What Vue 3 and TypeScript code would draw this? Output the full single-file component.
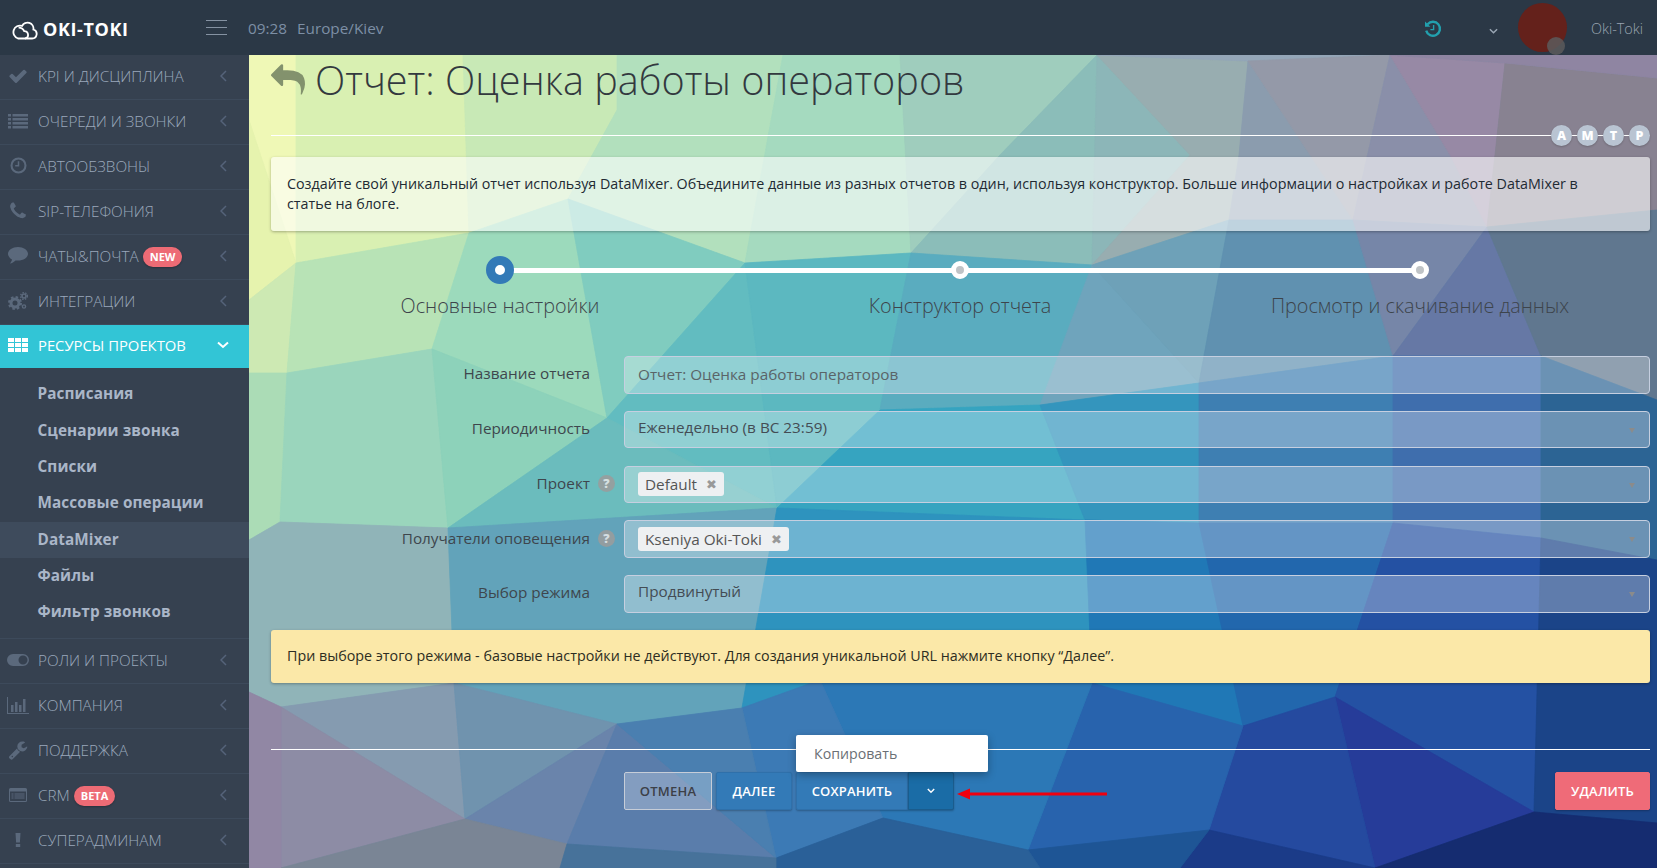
<script setup lang="ts">
interface Poly { p: string; f: string }
const polys: Poly[] = [
  { p: '249,55 296,55 296,263 249,120', f: '#eff8b6' },
  { p: '249,120 296,263 249,300', f: '#e6f3ae' },
  { p: '296,55 463,55 469,233 296,263', f: '#d9f0b2' },
  { p: '463,55 617,55 617,110 568,199 469,233', f: '#c8e9b6' },
  { p: '617,55 783,55 745,263 568,199 617,110', f: '#b2e0bd' },
  { p: '783,55 900,55 911,253 745,263', f: '#a5dabf' },
  { p: '900,55 1097,55 1000,155 911,253', f: '#9fcdbd' },
  { p: '1097,55 1000,155 911,253 1092,265', f: '#8bbdb9' },
  { p: '1097,55 1190,155 1092,265', f: '#8cb6b8' },
  { p: '1097,55 1248,61 1239,155 1229,220 1092,265 1190,155', f: '#98adb0' },
  { p: '1097,55 1390,55 1248,61', f: '#94a6b8' },
  { p: '1248,61 1310,155 1353,220 1229,220 1239,155', f: '#8b9cae' },
  { p: '1248,61 1390,55 1353,220 1310,155', f: '#9499a8' },
  { p: '1390,55 1450,155 1487,227 1353,220', f: '#8a8fa9' },
  { p: '1390,55 1505,63 1495,155 1487,227 1450,155', f: '#9789a5' },
  { p: '1505,63 1657,78 1657,210 1487,227 1495,155', f: '#888291' },
  { p: '1390,55 1657,55 1657,78 1505,63', f: '#8f85a2' },
  { p: '249,300 296,263 287,373 249,373', f: '#cde9b3' },
  { p: '296,263 469,233 432,349 287,373', f: '#b8e3b6' },
  { p: '469,233 568,199 607,418 432,349', f: '#9cdabc' },
  { p: '568,199 745,263 607,418', f: '#80ccbf' },
  { p: '745,263 777,508 607,418', f: '#62bcc0' },
  { p: '745,263 911,253 880,410 777,508', f: '#5cb8c0' },
  { p: '911,253 1092,265 1040,405 880,410', f: '#5aacbf' },
  { p: '1092,265 1199,383 1040,405', f: '#6fa4bc' },
  { p: '1092,265 1229,220 1199,383', f: '#6ea1b8' },
  { p: '1229,220 1353,220 1393,356 1199,383', f: '#6091b0' },
  { p: '1353,220 1487,227 1393,356', f: '#7686a8' },
  { p: '1393,356 1487,227 1541,356', f: '#6678a5' },
  { p: '1487,227 1657,210 1657,400 1541,356', f: '#60778f' },
  { p: '249,373 287,373 280,522 249,540', f: '#abdcb6' },
  { p: '287,373 432,349 448,528 280,522', f: '#9ad5bc' },
  { p: '432,349 607,418 448,528', f: '#8dd2ba' },
  { p: '448,528 607,418 777,508', f: '#6bbcbd' },
  { p: '249,540 280,522 448,528 454,683 281,707 249,692', f: '#90b4b8' },
  { p: '448,528 777,508 742,708 617,724 454,683', f: '#62a3ba' },
  { p: '777,508 880,410 1040,405 1085,520', f: '#36a4c0' },
  { p: '1040,405 1199,383 1199,523 1085,520', f: '#3495bd' },
  { p: '1199,383 1393,356 1393,523 1199,523', f: '#3e7fb2' },
  { p: '1393,356 1541,356 1541,538 1393,523', f: '#3f6ead' },
  { p: '1541,356 1657,400 1657,560 1541,538', f: '#2c6494' },
  { p: '777,508 1085,520 1092,683 820,680 742,708', f: '#2e93be' },
  { p: '1085,520 1199,523 1243,726 1092,683', f: '#2078b6' },
  { p: '1199,523 1393,523 1335,697 1243,726', f: '#2267ad' },
  { p: '1393,523 1541,538 1534,812 1335,697', f: '#2451a3' },
  { p: '1541,538 1657,560 1657,823 1534,812', f: '#1b4488' },
  { p: '1335,697 1534,812 1375,868', f: '#263c99' },
  { p: '1243,726 1335,697 1375,868 1209,830', f: '#254a9f' },
  { p: '1092,683 1243,726 1209,830 1028,850', f: '#2863ad' },
  { p: '820,680 1092,683 1028,850 883,818', f: '#2c78b6' },
  { p: '742,708 820,680 883,818 776,858', f: '#3c7ab5' },
  { p: '1534,812 1657,823 1657,868 1375,868', f: '#152c70' },
  { p: '1209,830 1375,868 1180,868', f: '#1b3b88' },
  { p: '1028,850 1209,830 1180,868 1040,868', f: '#1e5595' },
  { p: '883,818 1028,850 1040,868 776,868 776,858', f: '#2a6098' },
  { p: '281,707 454,683 465,819', f: '#859bb0' },
  { p: '454,683 617,724 465,819', f: '#7093ae' },
  { p: '617,724 567,844 465,819', f: '#6a84ab' },
  { p: '617,724 776,858 567,844', f: '#5a7dab' },
  { p: '617,724 742,708 776,858', f: '#4a7fb0' },
  { p: '281,707 465,819 281,868', f: '#8d8ca5' },
  { p: '249,692 281,707 281,868 249,868', f: '#9187a4' },
  { p: '465,819 567,844 560,868 281,868', f: '#7a8595' },
  { p: '567,844 776,858 776,868 560,868', f: '#47729a' },
]

interface Item { id: string; label: string; badge?: string; open?: boolean }
const topItems: Item[] = [
  { id: 'check', label: 'KPI И ДИСЦИПЛИНА' },
  { id: 'list', label: 'ОЧЕРЕДИ И ЗВОНКИ' },
  { id: 'clock', label: 'АВТООБЗВОНЫ' },
  { id: 'phone', label: 'SIP-ТЕЛЕФОНИЯ' },
  { id: 'chat', label: 'ЧАТЫ&ПОЧТА', badge: 'NEW' },
  { id: 'cogs', label: 'ИНТЕГРАЦИИ' },
]
const subItems = ['Расписания', 'Сценарии звонка', 'Списки', 'Массовые операции', 'DataMixer', 'Файлы', 'Фильтр звонков']
const bottomItems: Item[] = [
  { id: 'toggle', label: 'РОЛИ И ПРОЕКТЫ' },
  { id: 'chart', label: 'КОМПАНИЯ' },
  { id: 'wrench', label: 'ПОДДЕРЖКА' },
  { id: 'crm', label: 'CRM', badge: 'BETA' },
  { id: 'excl', label: 'СУПЕРАДМИНАМ' },
]
const amtp = ['A', 'M', 'T', 'P']
const steps = [
  { label: 'Основные настройки', active: true },
  { label: 'Конструктор отчета', active: false },
  { label: 'Просмотр и скачивание данных', active: false },
]
</script>

<template>
  <div class="app">
    <header class="topbar">
      <div class="brand">
        <svg class="cloud" viewBox="0 0 26 20" fill="none" stroke="#fff" stroke-width="1.8">
          <path d="M6 18.5h14a4.6 4.6 0 0 0 1.4-9 6 6 0 0 0-11.3-3.6A6.2 6.2 0 0 0 6 18.5z" />
          <path d="M6.6 7.6a6 6 0 0 1 5.6 3.6 4 4 0 0 1 3.9 3.8 3.6 3.6 0 0 1-3 3.5" />
        </svg>
        <span class="brand-text">OKI-TOKI</span>
      </div>
      <div class="burger"><i></i><i></i><i></i></div>
      <span class="time">09:28</span>
      <span class="zone">Europe/Kiev</span>
      <div class="top-right">
        <svg class="history" viewBox="0 0 18 18" fill="none" stroke="#22a0ae" stroke-width="2.4">
          <path d="M3.6 4.2A7 7 0 1 1 2.2 10.6" />
          <path d="M1 1.4v5.4h5.4z" fill="#22a0ae" stroke="none" />
          <path d="M9.6 5v4.6H6.4" stroke-width="1.4" />
        </svg>
        <svg class="top-chev" viewBox="0 0 10 7" fill="none" stroke="#9aa6b4" stroke-width="1.6">
          <path d="M1 1l4 4 4-4" />
        </svg>
        <div class="avatar"><span class="presence"></span></div>
        <span class="username">Oki-Toki</span>
      </div>
    </header>

    <div class="body">
      <aside class="sidebar">
        <template v-for="it in topItems" :key="it.id">
          <div class="nav-item">
            <span class="nav-ico">
              <svg v-if="it.id === 'check'" viewBox="0 0 1792 1792" width="20" height="20"><path d="M1671 566q0 40-28 68l-724 724-136 136q-28 28-68 28t-68-28l-136-136-362-362q-28-28-28-68t28-68l136-136q28-28 68-28t68 28l294 295 656-657q28-28 68-28t68 28l136 136q28 28 28 68z" /></svg>
              <svg v-else-if="it.id === 'list'" viewBox="0 0 20 16" width="20" height="16"><path d="M0 1h3v2.4H0zM4.5 1H20v2.4H4.500zM0 5h3v2.400H0zM4.500 5H20v2.400H4.500zM0 9h3v2.400H0zM4.500 9H20v2.400H4.500zM0 13h3v2.400H0zM4.500 13H20v2.400H4.500z" /></svg>
              <svg v-else-if="it.id === 'clock'" viewBox="0 0 18 18" width="17" height="17"><circle cx="9" cy="9" r="7.400" fill="none" stroke="currentColor" stroke-width="2.200" /><path d="M9.800 4.500v5.500H5.500V8.400h2.700V4.500z" /></svg>
              <svg v-else-if="it.id === 'phone'" viewBox="0 0 1792 1792" width="20" height="20"><path d="M1600 1240q0 27-10 70.500t-21 68.500q-21 50-122 106-94 51-186 51-27 0-53-3.500t-57.500-12.500-47-14.500-55.500-20.500-49-18q-98-35-175-83-127-79-264-216t-216-264q-48-77-83-175-3-9-18-49t-20.500-55.500-14.500-47-12.500-57.500-3.500-53q0-92 51-186 56-101 106-122 25-11 68.500-21t70.500-10q14 0 21 3 18 6 53 76 11 19 30 54t35 63.500 31 53.500q3 4 17.500 25t21.500 35.500 7 28.500q0 20-28.500 50t-62 55-62 53-28.500 46q0 9 5 22.500t8.500 20.500 14 24 11.500 19q76 137 174 235t235 174q2 1 19 11.500t24 14 20.500 8.500 22.500 5q18 0 46-28.500t53-62 55-62 50-28.500q14 0 28.500 7t35.500 21.500 25 17.500q25 15 53.500 31t63.500 35 54 30q70 35 76 53 3 7 3 21z" /></svg>
              <svg v-else-if="it.id === 'chat'" viewBox="0 0 20 17" width="20" height="17"><path d="M10 0c5.500 0 10 3 10 6.800s-4.500 6.800-10 6.800c-.9 0-1.700-.1-2.500-.2C6 15 4 16.200 1.800 16.500c1-1 1.900-2.200 2.200-4C1.600 11.200 0 9.100 0 6.800 0 3 4.500 0 10 0z" /></svg>
              <svg v-else viewBox="0 0 20 18" width="20" height="18">
                <circle cx="7" cy="11" r="4" fill="none" stroke="currentColor" stroke-width="3" />
                <circle cx="7" cy="11" r="6" fill="none" stroke="currentColor" stroke-width="2" stroke-dasharray="2.500 2.200" />
                <circle cx="16" cy="4" r="2" fill="none" stroke="currentColor" stroke-width="1.600" />
                <circle cx="16" cy="4" r="3.400" fill="none" stroke="currentColor" stroke-width="1.400" stroke-dasharray="1.500 1.300" />
                <circle cx="16" cy="14.500" r="1.600" fill="none" stroke="currentColor" stroke-width="1.400" />
              </svg>
            </span>
            <span class="nav-label">{{ it.label }}</span>
            <span v-if="it.badge" class="badge">{{ it.badge }}</span>
            <svg class="nav-chev" viewBox="0 0 7 12" fill="none" stroke="currentColor" stroke-width="1.500"><path d="M6 1L1 6l5 5" /></svg>
          </div>
        </template>

        <div class="nav-item active">
          <span class="nav-ico">
            <svg viewBox="0 0 20 16" width="20" height="16"><path d="M0 1h6v4H0zM7 1h6v4H7zM14 1h6v4h-6zM0 6h6v4H0zM7 6h6v4H7zM14 6h6v4h-6zM0 11h6v4H0zM7 11h6v4H7zM14 11h6v4h-6z" /></svg>
          </span>
          <span class="nav-label">РЕСУРСЫ ПРОЕКТОВ</span>
          <svg class="nav-chev down" viewBox="0 0 12 8" fill="none" stroke="currentColor" stroke-width="2"><path d="M1 1.500l5 4.500 5-4.500" /></svg>
        </div>

        <div class="sub-list">
          <div v-for="s in subItems" :key="s" class="sub-item" :class="{ current: s === 'DataMixer' }">{{ s }}</div>
        </div>

        <template v-for="it in bottomItems" :key="it.id">
          <div class="nav-item">
            <span class="nav-ico">
              <svg v-if="it.id === 'toggle'" viewBox="0 0 22 12" width="22" height="12"><path fill-rule="evenodd" d="M6 0h10a6 6 0 0 1 0 12H6A6 6 0 0 1 6 0zm10 1.500a4.500 4.500 0 1 0 0 9 4.500 4.500 0 0 0 0-9z" /></svg>
              <svg v-else-if="it.id === 'chart'" viewBox="0 0 22 18" width="22" height="18"><path d="M0 1h1v16h21v1H0zM4 9h2.500v7H4zM8 6h2.500v10H8zM12 9h2.500v7H12zM16 3h2.500v13H16z" /></svg>
              <svg v-else-if="it.id === 'wrench'" viewBox="0 0 1792 1792" width="20" height="20"><path d="M448 1472q0-26-19-45t-45-19-45 19-19 45 19 45 45 19 45-19 19-45zm644-420l-682 682q-37 37-90 37-52 0-91-37l-106-108q-38-36-38-90 0-53 38-91l681-681q39 98 114.500 173.500t173.500 114.500zm634-435q0 39-23 106-47 134-164.500 217.500t-258.500 83.500q-185 0-316.500-131.500t-131.500-316.500 131.500-316.500 316.500-131.500q58 0 121.500 16.500t107.500 46.500q16 11 16 28t-16 28l-293 169v224l193 107q5-3 79-48.500t135.500-81 70.500-35.500q15 0 23.500 10t8.500 25z" /></svg>
              <svg v-else-if="it.id === 'crm'" viewBox="0 0 18 14" width="18" height="14"><path fill-rule="evenodd" d="M1.500 0h15A1.500 1.500 0 0 1 18 1.500v11a1.500 1.500 0 0 1-1.500 1.500h-15A1.500 1.500 0 0 1 0 12.500v-11A1.500 1.500 0 0 1 1.500 0zM1 3.500V12.500c0 .3.200.5.500.5h15c.3 0 .5-.2.500-.5V3.500zM2.500 5.500h2v1h-2zM5.500 5.500h10v1h-10zM2.500 7.500h2v1h-2zM5.500 7.500h10v1h-10zM2.500 9.500h2v1h-2zM5.500 9.500h10v1h-10z" /></svg>
              <svg v-else viewBox="0 0 6 14" width="6" height="14"><path d="M.5 0h5l-.6 9.500H1.100zM.8 11h4.400v3H.800z" /></svg>
            </span>
            <span class="nav-label">{{ it.label }}</span>
            <span v-if="it.badge" class="badge">{{ it.badge }}</span>
            <svg class="nav-chev" viewBox="0 0 7 12" fill="none" stroke="currentColor" stroke-width="1.500"><path d="M6 1L1 6l5 5" /></svg>
          </div>
        </template>
      </aside>

      <main class="main">
        <svg class="poly-bg" viewBox="249 55 1408 813" preserveAspectRatio="none">
          <defs>
            <linearGradient id="basefill" x1="0" y1="0" x2="1" y2="1">
              <stop offset="0" stop-color="#d8efb3" />
              <stop offset="0.5" stop-color="#3d9fc0" />
              <stop offset="1" stop-color="#1a3a85" />
            </linearGradient>
          </defs>
          <rect x="249" y="55" width="1408" height="813" fill="url(#basefill)" />
          <polygon v-for="(pl, i) in polys" :key="i" :points="pl.p" :fill="pl.f" :stroke="pl.f" stroke-width="0.8" />
        </svg>

        <div class="content">
          <div class="title-row">
            <svg class="back" viewBox="0 0 1792 1792" width="34" height="34"><path d="M1792 1120q0 166-127 451-3 7-10.500 24t-13.500 30-13 22q-12 17-28 17-15 0-23.500-10t-8.500-25q0-9 2.500-26.500t2.500-23.500q5-68 5-123 0-101-17.500-181t-48.500-138.500-80-101-105.500-69.500-133-42.500-154-21.500-175.500-6h-224v256q0 26-19 45t-45 19-45-19l-512-512q-19-19-19-45t19-45l512-512q19-19 45-19t45 19 19 45v256h224q713 0 875 403 53 134 53 333z" /></svg>
            <h1 class="title">Отчет: Оценка работы операторов</h1>
            <div class="amtp">
              <span v-for="l in amtp" :key="l" class="amtp-dot">{{ l }}</span>
            </div>
          </div>

          <div class="info">Создайте свой уникальный отчет используя DataMixer. Объедините данные из разных отчетов в один, используя конструктор. Больше информации о настройках и работе DataMixer в статье на блоге.</div>

          <div class="stepper">
            <div v-for="(st, i) in steps" :key="st.label" class="step">
              <div class="step-track">
                <span v-if="i < steps.length - 1" class="step-line"></span>
                <span class="step-dot" :class="{ on: st.active }"></span>
              </div>
              <div class="step-label">{{ st.label }}</div>
            </div>
          </div>

          <div class="form">
            <label class="f-label">Название отчета</label>
            <span></span>
            <div class="field muted">Отчет: Оценка работы операторов</div>

            <label class="f-label">Периодичность</label>
            <span></span>
            <div class="field select lift">Еженедельно (в ВС 23:59)<i class="caret"></i></div>

            <label class="f-label">Проект</label>
            <span class="help">?</span>
            <div class="field select"><span class="chip">Default<b class="x">✖</b></span><i class="caret"></i></div>

            <label class="f-label">Получатели оповещения</label>
            <span class="help">?</span>
            <div class="field select"><span class="chip">Kseniya Oki-Toki<b class="x">✖</b></span><i class="caret"></i></div>

            <label class="f-label">Выбор режима</label>
            <span></span>
            <div class="field select lift">Продвинутый<i class="caret"></i></div>
          </div>

          <div class="alert">При выборе этого режима - базовые настройки не действуют. Для создания уникальной URL нажмите кнопку “Далее”.</div>

          <div class="rule"></div>

          <div class="actions">
            <button class="btn ghost">ОТМЕНА</button>
            <button class="btn blue">ДАЛЕЕ</button>
            <div class="split">
              <div class="menu">Копировать</div>
              <button class="btn blue save">СОХРАНИТЬ</button>
              <button class="btn blue caret-btn">
                <svg viewBox="0 0 10 7" width="8" height="6" fill="none" stroke="#fff" stroke-width="1.800"><path d="M1 1l4 4 4-4" /></svg>
              </button>
              <svg class="arrow" viewBox="0 0 150 12" width="150" height="12"><path d="M0 6L13 .5v4h137v3H13v4z" fill="#f0000f" /></svg>
            </div>
            <button class="btn danger">УДАЛИТЬ</button>
          </div>
        </div>
      </main>
    </div>
  </div>
</template>

<style>
html, body { margin: 0; padding: 0; overflow: hidden; }
</style>

<style scoped>
.app { width: 1657px; height: 868px; display: flex; flex-direction: column; overflow: hidden; font-family: "Open Sans", "Noto Sans", sans-serif; }
.topbar { height: 55px; box-sizing: border-box; padding-top: 2px; flex: none; background: #2b3846; display: flex; align-items: center; position: relative; z-index: 3; }
.brand { width: 206px; display: flex; align-items: center; padding-left: 12px; box-sizing: border-box; }
.cloud { width: 26px; height: 20px; margin-right: 5px; margin-top: 2px; }
.brand-text { color: #fff; font-size: 18px; font-weight: 700; letter-spacing: .6px; line-height: 1; margin-top: 1px; }
.burger { width: 21px; height: 15px; display: flex; flex-direction: column; justify-content: space-between; margin-top: -2px; }
.burger i { display: block; height: 1px; background: #8592a2; }
.time { color: #7d8fa5; font-size: 15.300px; margin-left: 21px; margin-top: -2px; }
.zone { color: #7d8fa5; font-size: 15.300px; margin-left: 10px; margin-top: -2px; }
.top-right { margin-left: auto; display: flex; align-items: center; padding-right: 14px; }
.history { width: 18px; height: 18px; margin-right: 47px; margin-top: 0; }
.top-chev { width: 9px; height: 7px; margin-right: 20px; margin-top: 6px; }
.avatar { width: 49px; height: 49px; border-radius: 50%; background: #64211b; position: relative; margin-right: 24px; margin-top: -3px; }
.presence { position: absolute; width: 18px; height: 18px; border-radius: 50%; background: #5c5a5c; left: 29px; top: 34px; opacity: .85; }
.username { color: #9aa5b1; font-size: 14.400px; font-weight: 300; }

.body { flex: 1; display: flex; min-height: 0; }
.sidebar { width: 249px; flex: none; background: #364150; overflow: hidden; }
.nav-item { height: 44.950px; box-sizing: border-box; border-bottom: 1px solid #3d4a5b; display: flex; align-items: center; padding: 0 0 2px 38px; position: relative; color: #9aa8bb; }
.nav-ico { position: absolute; left: 6px; width: 24px; top: 0; bottom: 2px; display: flex; align-items: center; justify-content: center; color: #5b697c; fill: #5b697c; margin-left: 0; }
.nav-label { font-size: 15.300px; font-weight: 300; white-space: nowrap; letter-spacing: 0; }
.badge { background: #ed6b75; color: #fff; font-size: 11px; font-weight: 700; border-radius: 10px; height: 20px; line-height: 20px; padding: 0 7px; margin-left: 4px; margin-top: 2px; box-shadow: 0 1px 2px rgba(0,0,0,.25); }
.nav-chev { position: absolute; left: 220px; width: 7px; height: 12px; color: #55637a; top: 15px; }
.nav-item.active { background: #32c5d6; border-bottom: 0; height: 43.700px; color: #fff; padding-bottom: 3px; }
.nav-item.active .nav-ico { color: #fff; fill: #fff; bottom: 3px; }
.nav-item.active .nav-label { font-weight: 400; font-size: 14.800px; }
.nav-chev.down { left: 217px; width: 12px; height: 8px; color: #fff; top: 16px; }
.sub-list { padding: 8px 0 8px; border-bottom: 1px solid #3d4a5b; }
.sub-item { height: 36.300px; line-height: 35.500px; padding-left: 37.500px; color: #aab6c8; font-size: 15.300px; font-weight: 700; letter-spacing: .1px; }
.sub-item.current { background: #3e4b5c; }

.main { flex: 1; position: relative; min-width: 0; }
.poly-bg { position: absolute; inset: 0; width: 100%; height: 100%; }
.content { position: relative; padding: 0 7px 0 22px; }

.title-row { height: 81px; box-sizing: border-box; border-bottom: 1px solid #fff; position: relative; display: flex; align-items: flex-start; }
.back { fill: #7e8d6a; margin: 8px 10px 0 0; flex: none; opacity: .95; }
.title { margin: 0; font-size: 39.600px; font-weight: 300; color: #33393f; line-height: 50px; white-space: nowrap; }
.amtp { position: absolute; right: 0; bottom: -11px; display: flex; gap: 5px; }
.amtp-dot { width: 21px; height: 21px; border-radius: 50%; background: #b9c4d2; color: #fff; font-size: 12.500px; font-weight: 800; text-align: center; line-height: 21px; box-shadow: 0 1px 2px rgba(0,0,0,.2); }

.info { margin-top: 21px; padding: 17px 40px 17px 16px; border-radius: 3px; background: rgba(255,255,255,.6); color: #222a33; font-size: 14.300px; line-height: 20px; box-shadow: 0 1px 3px rgba(0,0,0,.3); }

.stepper { height: 125px; display: grid; grid-template-columns: repeat(3, 460px); margin-left: -1px; }
.step { position: relative; text-align: center; }
.step-track { height: 28px; margin-top: 25px; position: relative; display: flex; align-items: center; justify-content: center; }
.step-line { position: absolute; left: 50%; width: 100%; height: 5px; background: #fff; top: 12px; }
.step-dot { position: relative; width: 18px; height: 18px; box-sizing: border-box; border-radius: 50%; background: #bfc3c6; border: 5px solid #fff; }
.step-dot.on { width: 28px; height: 28px; background: #fff; border: 9px solid #337ab7; }
.step-label { margin-top: 9px; font-size: 19.800px; font-weight: 300; color: #3d444b; line-height: 26px; white-space: nowrap; }

.form { display: grid; grid-template-columns: 319px 34px 1fr; grid-auto-rows: 37.500px; row-gap: 17.300px; align-items: center; }
.f-label { text-align: right; font-size: 15.300px; color: #3e464d; white-space: nowrap; margin-top: -3px; }
.help { width: 17px; height: 17px; border-radius: 50%; background: #9c9c9c; color: #e8e8e8; font-size: 12.500px; font-weight: 800; text-align: center; line-height: 17px; margin-left: 8px; opacity: .85; margin-top: -2px; }
.field { height: 37.500px; box-sizing: border-box; border: 1px solid #c6cfe0; border-radius: 4px; background: rgba(255,255,255,.3); padding: 0 13px; display: flex; align-items: center; font-size: 15.300px; color: #444c54; position: relative; }
.field.muted { color: #5a6468; padding-bottom: 2px; }
.field.lift { padding-bottom: 6px; }
.caret { position: absolute; right: 14px; top: 16px; width: 0; height: 0; border-left: 3.500px solid transparent; border-right: 3.500px solid transparent; border-top: 5px solid #8b8b8b; }
.chip { height: 24px; box-sizing: border-box; background: #eef0f2; border-radius: 3px; padding: 0 7px; display: inline-flex; align-items: center; font-size: 15.300px; color: #555; gap: 9px; }
.x { font-size: 13px; color: #999; font-weight: 400; font-family: "DejaVu Sans", sans-serif; }

.alert { margin-top: 17px; height: 53px; box-sizing: border-box; padding: 16px; line-height: 20px; background: #fbe8a8; border-radius: 3px; font-size: 14.300px; color: #2d2d22; box-shadow: 0 1px 3px rgba(0,0,0,.3); }
.rule { margin-top: 66px; height: 1px; background: #fff; }
.actions { margin-top: 22px; display: flex; height: 38px; padding-left: 353px; }
.btn { height: 38px; box-sizing: border-box; border-radius: 2px; border: 1px solid transparent; font-family: inherit; font-size: 13px; font-weight: 600; padding: 0; color: #fff; letter-spacing: .2px; }
.ghost { width: 88px; background: rgba(255,255,255,.25); border: 1px solid #c6cdd8; color: #3c4047; }
.blue { background: #337ab7; box-shadow: 0 1px 2px rgba(0,0,0,.25); border-color: #2f70aa; }
.btn.blue:not(.save):not(.caret-btn) { width: 76px; margin-left: 4px; }
.split { position: relative; display: flex; margin-left: 4px; }
.save { width: 112px; border-radius: 2px 0 0 2px; }
.caret-btn { width: 46px; background: #1a6ca6; border-color: #1a5c8d; border-radius: 0 2px 2px 0; display: flex; align-items: center; justify-content: center; }
.menu { position: absolute; left: 0; bottom: 100%; width: 192px; height: 37px; box-sizing: border-box; background: #fff; border-radius: 2px; padding-left: 18px; line-height: 37px; font-size: 14.200px; color: #6b6f75; box-shadow: 0 3px 8px rgba(0,0,0,.3); z-index: 2; }
.arrow { position: absolute; left: 161px; top: 16px; }
.danger { margin-left: auto; width: 95px; background: #ef6b78; box-shadow: 0 1px 2px rgba(0,0,0,.25); border-color: #ef6b78; }
</style>
